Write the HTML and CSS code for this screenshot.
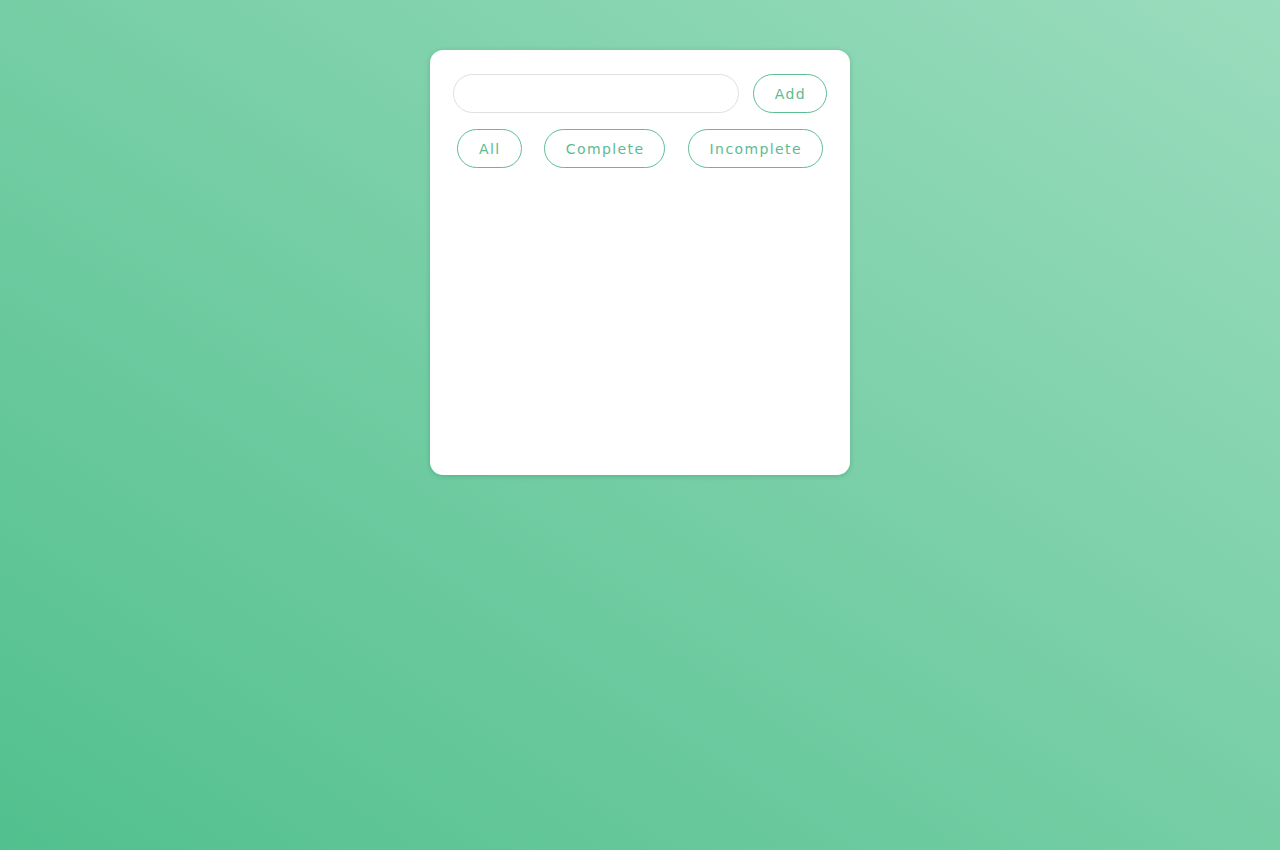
FILE: index.html
```html
<!DOCTYPE html>
<html lang="en">
<head>
<meta charset="utf-8">
<title>Todo</title>
<link rel="stylesheet" href="styles.css">
</head>
<body>
<main class="card">
  <form class="add-row">
    <input class="task-input" type="text">
    <button class="btn" type="button">Add</button>
  </form>
  <div class="filters">
    <button class="btn" type="button">All</button>
    <button class="btn" type="button">Complete</button>
    <button class="btn" type="button">Incomplete</button>
  </div>
  <ul class="list"></ul>
</main>
</body>
</html>
```
FILE: styles.css
```css
html, body {
  margin: 0;
  height: 100%;
}
body {
  background: linear-gradient(to top right, #52c08e 0%, #9adcbd 100%);
  font-family: "DejaVu Sans", sans-serif;
  display: flex;
  justify-content: center;
  align-items: flex-start;
  padding-top: 50px;
  box-sizing: border-box;
}
.card {
  width: 420px;
  height: 425px;
  background: #fff;
  border-radius: 13px;
  box-shadow: 0 1px 5px rgba(20, 90, 60, 0.25);
  padding: 24px 23px;
  box-sizing: border-box;
}
.add-row {
  display: flex;
  gap: 14px;
  margin: 0;
}
.task-input {
  flex: 1;
  height: 39px;
  box-sizing: border-box;
  border: 1px solid #e0e0e0;
  border-radius: 20px;
  padding: 0 16px;
  outline: none;
  font-family: inherit;
  font-size: 14px;
}
.btn {
  height: 39px;
  box-sizing: border-box;
  border: 1px solid #5cbf94;
  border-radius: 20px;
  background: #fff;
  color: #5cbb92;
  font-family: "DejaVu Sans", sans-serif;
  font-size: 14px;
  letter-spacing: 1.4px;
  padding: 0 20px 0 21px;
  cursor: pointer;
}
.filters {
  display: flex;
  justify-content: space-between;
  padding: 0 4px;
  margin-top: 16px;
}
.list {
  margin: 0;
  padding: 0;
  list-style: none;
}
```
